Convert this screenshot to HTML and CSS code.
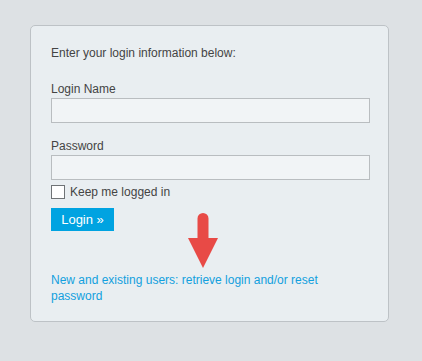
FILE: index.html
```html
<!DOCTYPE html>
<html lang="en">
<head>
    <meta charset="UTF-8">
    <title>Login</title>
    <link rel="stylesheet" href="styles.css">
</head>
<body>
    <div class="panel">
        <p class="intro">Enter your login information below:</p>

        <label class="label" for="loginName">Login Name</label>
        <input class="field" type="text" id="loginName">

        <label class="label label-pw" for="password">Password</label>
        <input class="field" type="password" id="password">

        <label class="remember">
            <span class="box"></span>
            Keep me logged in
        </label>

        <button class="btn">Login &raquo;</button>

        <a class="reset" href="#">New and existing users: retrieve login and/or reset password</a>

        <!-- Hinweis-Pfeil -->
        <svg class="arrow" width="32" height="56" viewBox="0 0 32 56">
            <path d="M10.5 5.5 a5.5 5.5 0 0 1 11 0 V25 H31 L16 55 L1 25 H10.5 Z" fill="#e84a46"/>
        </svg>
    </div>
</body>
</html>
```

FILE: styles.css
```css
body {
    margin: 0;
    background-color: #dde1e4;
    font-family: 'Liberation Sans', Arial, sans-serif;
    font-size: 12px;
    color: #444;
}
.panel {
    position: relative;
    box-sizing: border-box;
    width: 359px;
    height: 297px;
    margin: 25px 0 0 30px;
    padding: 20px 17px 0 20px;
    background-color: #e9eef1;
    border: 1px solid #bdc2c6;
    border-radius: 5px;
}
.intro {
    margin: 0;
    line-height: 14px;
}
.label {
    display: block;
    margin-top: 22px;
    line-height: 14px;
    font-size: 12px;
}
.label-pw {
    margin-top: 16px;
}
.field {
    display: block;
    box-sizing: border-box;
    width: 319px;
    height: 25px;
    margin-top: 2px;
    border: 1px solid #b9bdc0;
    background-color: #f1f4f6;
    border-radius: 0;
    padding: 0 4px;
}
.remember {
    display: flex;
    align-items: center;
    gap: 5px;
    margin-top: 5px;
    line-height: 14px;
}
.box {
    box-sizing: border-box;
    width: 14px;
    height: 14px;
    border: 1px solid #6f7376;
    background-color: #fff;
}
.btn {
    display: block;
    margin-top: 9px;
    width: 63px;
    height: 23px;
    padding: 0;
    border: none;
    background-color: #00a3e1;
    color: #fff;
    font-family: 'Liberation Sans', Arial, sans-serif;
    font-size: 13px;
}
.reset {
    display: block;
    width: 310px;
    margin-top: 41px;
    line-height: 16px;
    color: #12a0de;
    text-decoration: none;
}
.arrow {
    position: absolute;
    left: 156px;
    top: 187px;
}
```
